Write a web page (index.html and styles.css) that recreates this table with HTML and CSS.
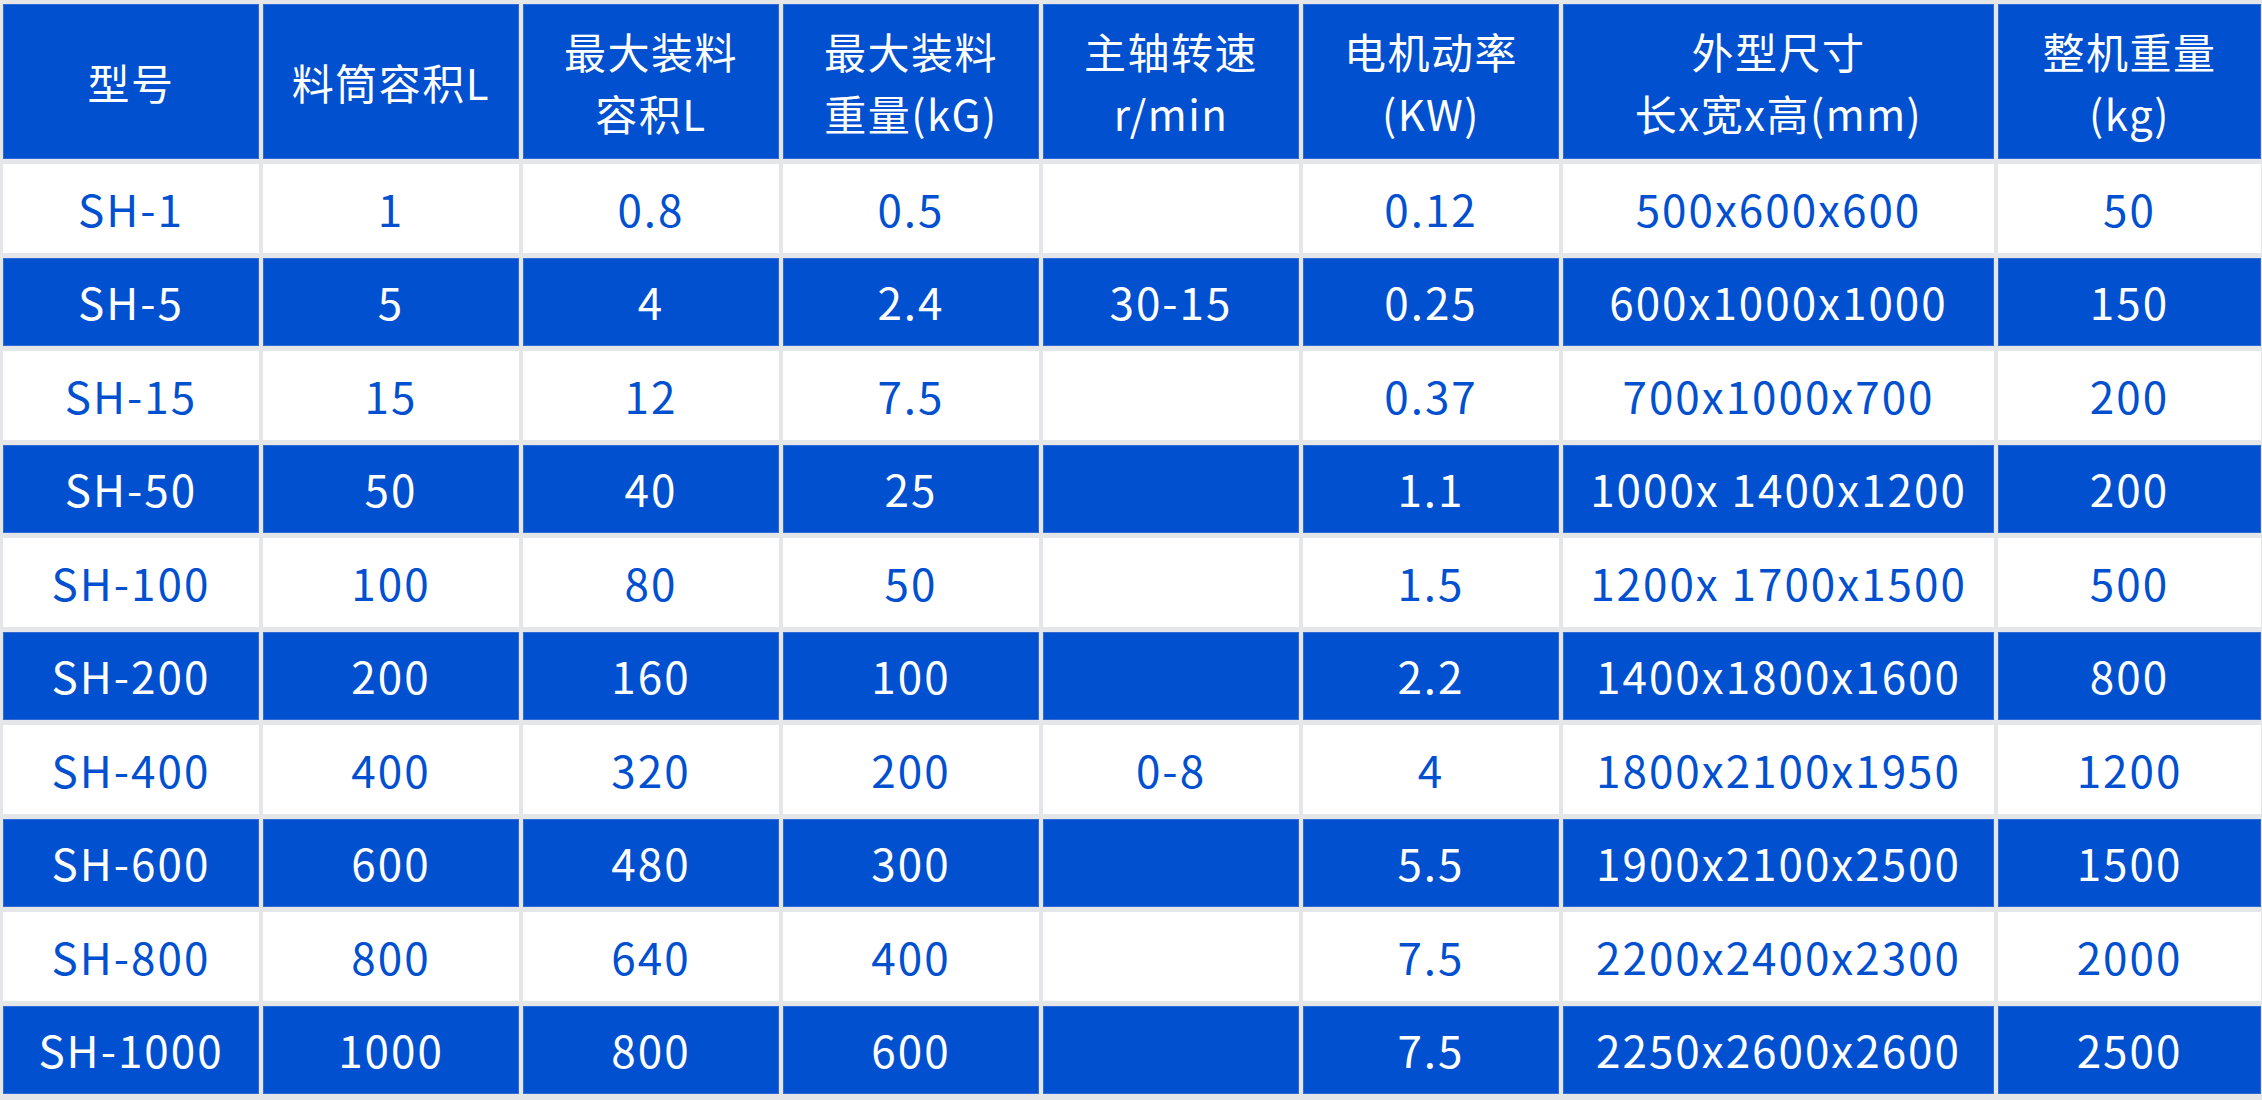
FILE: index.html
```html
<!DOCTYPE html>
<html lang="zh-CN">
<head>
<meta charset="utf-8">
<title>参数表</title>
<link rel="stylesheet" href="styles.css">
</head>
<body>
<table class="spec">
  <colgroup>
    <col class="c-n"><col class="c-n"><col class="c-n"><col class="c-n"><col class="c-n"><col class="c-n"><col class="c-size"><col class="c-w">
  </colgroup>
  <thead>
    <tr>
      <th>型号</th>
      <th>料筒容积L</th>
      <th>最大装料<br>容积L</th>
      <th>最大装料<br>重量(kG)</th>
      <th>主轴转速<br>r/min</th>
      <th>电机动率<br>(KW)</th>
      <th>外型尺寸<br>长x宽x高(mm)</th>
      <th>整机重量<br>(kg)</th>
    </tr>
  </thead>
  <tbody>
    <tr class="light"><td>SH-1</td><td>1</td><td>0.8</td><td>0.5</td><td></td><td>0.12</td><td>500x600x600</td><td>50</td></tr>
    <tr class="dark"><td>SH-5</td><td>5</td><td>4</td><td>2.4</td><td>30-15</td><td>0.25</td><td>600x1000x1000</td><td>150</td></tr>
    <tr class="light"><td>SH-15</td><td>15</td><td>12</td><td>7.5</td><td></td><td>0.37</td><td>700x1000x700</td><td>200</td></tr>
    <tr class="dark"><td>SH-50</td><td>50</td><td>40</td><td>25</td><td></td><td>1.1</td><td>1000x 1400x1200</td><td>200</td></tr>
    <tr class="light"><td>SH-100</td><td>100</td><td>80</td><td>50</td><td></td><td>1.5</td><td>1200x 1700x1500</td><td>500</td></tr>
    <tr class="dark"><td>SH-200</td><td>200</td><td>160</td><td>100</td><td></td><td>2.2</td><td>1400x1800x1600</td><td>800</td></tr>
    <tr class="light"><td>SH-400</td><td>400</td><td>320</td><td>200</td><td>0-8</td><td>4</td><td>1800x2100x1950</td><td>1200</td></tr>
    <tr class="dark"><td>SH-600</td><td>600</td><td>480</td><td>300</td><td></td><td>5.5</td><td>1900x2100x2500</td><td>1500</td></tr>
    <tr class="light"><td>SH-800</td><td>800</td><td>640</td><td>400</td><td></td><td>7.5</td><td>2200x2400x2300</td><td>2000</td></tr>
    <tr class="dark"><td>SH-1000</td><td>1000</td><td>800</td><td>600</td><td></td><td>7.5</td><td>2250x2600x2600</td><td>2500</td></tr>
  </tbody>
</table>
</body>
</html>
```
FILE: styles.css
```css
html, body {
  margin: 0;
  padding: 0;
  background: #e5e6e8;
}
body {
  font-family: "Noto Sans CJK SC", "Noto Sans", sans-serif;
}
.spec {
  width: 2262px;
  table-layout: fixed;
  border-collapse: separate;
  border-spacing: 4px 5px;
  margin: -1px 0 0 -1px;
}
.c-n { width: 256px; }
.c-size { width: 431px; }
.c-w { width: 263px; }
.spec th,
.spec td {
  padding: 0;
  text-align: center;
  vertical-align: middle;
  font-weight: 400;
  border: 1px solid transparent;
}
.spec th {
  height: 153px;
  font-size: 42px;
  letter-spacing: 1.5px;
  line-height: 62px;
  background: #0050d0;
  border-color: #2f6ad6;
  color: #ffffff;
}
.spec td {
  height: 86.5px;
  font-size: 44px;
  letter-spacing: 2px;
  line-height: 1.2;
}
.light td {
  background: #ffffff;
  border-color: #ffffff;
  color: #0050d0;
}
.dark td {
  background: #0050d0;
  border-color: #2f6ad6;
  color: #ffffff;
}
```
